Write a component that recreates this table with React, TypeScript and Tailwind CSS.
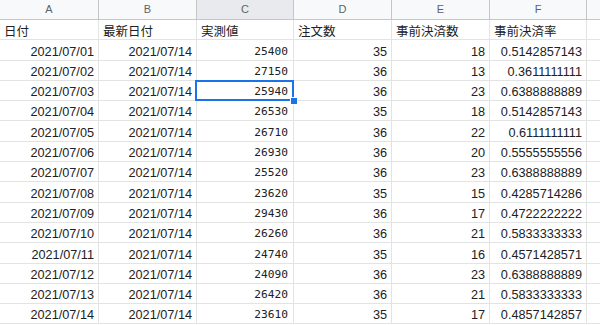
import React from 'react';

type Row = [string, string, string, string, string, string];

const rows: Row[] = [
  ['2021/07/01', '2021/07/14', '25400', '35', '18', '0.5142857143'],
  ['2021/07/02', '2021/07/14', '27150', '36', '13', '0.3611111111'],
  ['2021/07/03', '2021/07/14', '25940', '36', '23', '0.6388888889'],
  ['2021/07/04', '2021/07/14', '26530', '35', '18', '0.5142857143'],
  ['2021/07/05', '2021/07/14', '26710', '36', '22', '0.6111111111'],
  ['2021/07/06', '2021/07/14', '26930', '36', '20', '0.5555555556'],
  ['2021/07/07', '2021/07/14', '25520', '36', '23', '0.6388888889'],
  ['2021/07/08', '2021/07/14', '23620', '35', '15', '0.4285714286'],
  ['2021/07/09', '2021/07/14', '29430', '36', '17', '0.4722222222'],
  ['2021/07/10', '2021/07/14', '26260', '36', '21', '0.5833333333'],
  ['2021/07/11', '2021/07/14', '24740', '35', '16', '0.4571428571'],
  ['2021/07/12', '2021/07/14', '24090', '36', '23', '0.6388888889'],
  ['2021/07/13', '2021/07/14', '26420', '36', '21', '0.5833333333'],
  ['2021/07/14', '2021/07/14', '23610', '35', '17', '0.4857142857'],
];

const widths = ['w-[99px]', 'w-[98px]', 'w-[97px]', 'w-[98px]', 'w-[98px]', 'w-[97px]'];
const letters = ['A', 'B', 'C', 'D', 'E', 'F'];
const titles = ['日付', '最新日付', '実測値', '注文数', '事前決済数', '事前決済率'];

const sans = "font-['Liberation_Sans',Arial,sans-serif]";
const jp = "font-['Noto_Sans_CJK_JP','Liberation_Sans',sans-serif]";
const mono = "font-['DejaVu_Sans_Mono',monospace]";

export default function App() {
  return (
    <div className="w-[600px] h-[325px] overflow-hidden bg-white text-[#202124]">
      {/* column letters */}
      <div className="flex h-[20px] bg-[#f8f9fa] border-b border-[#c4c7c5]">
        {letters.map((l, i) => (
          <div
            key={l}
            className={`${widths[i]} shrink-0 flex items-center justify-center border-r border-[#c4c7c5] text-[11px] text-[#5f6368] ${sans} ${
              l === 'C' ? 'bg-[#e8eaed]' : ''
            }`}
          >
            {l}
          </div>
        ))}
        <div className="flex-1" />
      </div>

      {/* titles */}
      <div className="flex h-[20.3px] border-b border-[#e2e3e3]">
        {titles.map((t, i) => (
          <div
            key={t}
            className={`${widths[i]} shrink-0 flex items-end pl-[4px] border-r border-[#e2e3e3] text-[12.5px] leading-[16px] ${jp}`}
          >
            {t}
          </div>
        ))}
        <div className="flex-1" />
      </div>

      {rows.map((r, ri) => (
        <div key={ri} className="flex h-[20.3px] border-b border-[#e2e3e3]">
          {r.map((v, ci) => (
            <div
              key={ci}
              className={`${widths[ci]} shrink-0 relative flex items-end justify-end pr-[4px] border-r border-[#e2e3e3] leading-[16px] ${
                ci === 2 ? `${mono} text-[11.2px] pr-[5px]` : `${sans} text-[12.7px]`
              } ${ri === 2 && ci === 2 ? 'z-10' : ''}`}
            >
              {v}
              {ri === 2 && ci === 2 && (
                <>
                  {/* selected cell */}
                  <div className="absolute left-[-2px] top-[-1px] right-[-1px] bottom-[-1px] border-2 border-[#1a73e8]" />
                  <div className="absolute right-[-5px] bottom-[-5px] w-[8px] h-[8px] bg-[#1a73e8] border border-white" />
                </>
              )}
            </div>
          ))}
          <div className="flex-1" />
        </div>
      ))}
    </div>
  );
}
